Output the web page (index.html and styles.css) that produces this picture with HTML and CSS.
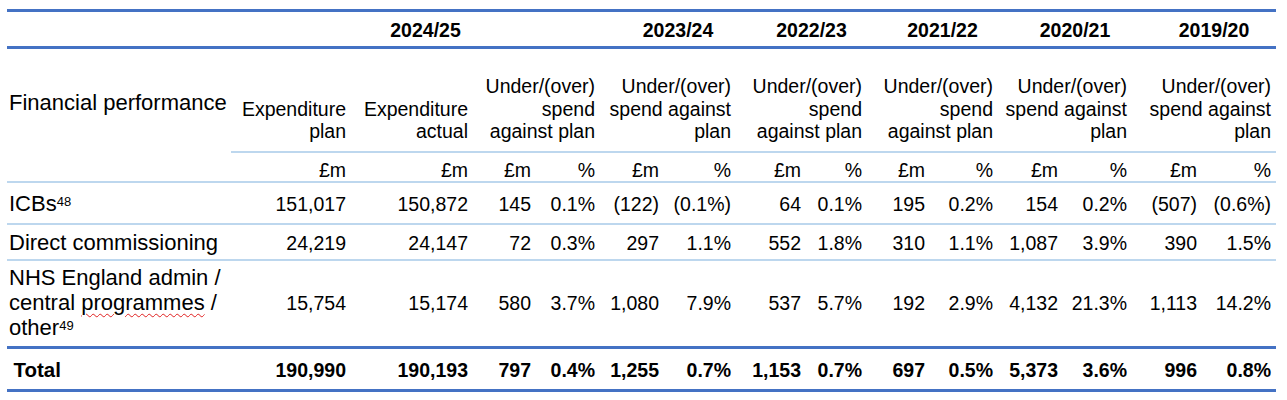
FILE: index.html
```html
<!DOCTYPE html>
<html lang="en">
<head>
<meta charset="utf-8">
<title>Financial performance</title>
<link rel="stylesheet" href="styles.css">
</head>
<body>
<div class="wrap">
<table class="fin">
  <colgroup>
    <col class="c-label">
    <col class="c-plan">
    <col class="c-actual">
    <col class="c-63"><col class="c-64">
    <col class="c-64"><col class="c-72">
    <col class="c-70"><col class="c-61">
    <col class="c-63"><col class="c-68">
    <col class="c-65"><col class="c-69">
    <col class="c-70"><col class="c-74">
  </colgroup>
  <thead>
    <tr class="years">
      <th></th>
      <th colspan="4">2024/25</th>
      <th colspan="2">2023/24</th>
      <th colspan="2">2022/23</th>
      <th colspan="2">2021/22</th>
      <th colspan="2">2020/21</th>
      <th colspan="2">2019/20</th>
    </tr>
    <tr class="heads">
      <th rowspan="2" class="label-head">Financial performance</th>
      <th>Expenditure<br>plan</th>
      <th>Expenditure<br>actual</th>
      <th colspan="2">Under/(over)<br>spend<br>against plan</th>
      <th colspan="2">Under/(over)<br>spend against<br>plan</th>
      <th colspan="2">Under/(over)<br>spend<br>against plan</th>
      <th colspan="2">Under/(over)<br>spend<br>against plan</th>
      <th colspan="2">Under/(over)<br>spend against<br>plan</th>
      <th colspan="2">Under/(over)<br>spend against<br>plan</th>
    </tr>
    <tr class="units">
      <th>£m</th><th>£m</th>
      <th>£m</th><th>%</th>
      <th>£m</th><th>%</th>
      <th>£m</th><th>%</th>
      <th>£m</th><th>%</th>
      <th>£m</th><th>%</th>
      <th>£m</th><th>%</th>
    </tr>
  </thead>
  <tbody>
    <tr class="row r-icb">
      <td class="label">ICBs<sup>48</sup></td>
      <td>151,017</td><td>150,872</td>
      <td>145</td><td>0.1%</td>
      <td>(122)</td><td>(0.1%)</td>
      <td>64</td><td>0.1%</td>
      <td>195</td><td>0.2%</td>
      <td>154</td><td>0.2%</td>
      <td>(507)</td><td>(0.6%)</td>
    </tr>
    <tr class="row r-direct">
      <td class="label">Direct commissioning</td>
      <td>24,219</td><td>24,147</td>
      <td>72</td><td>0.3%</td>
      <td>297</td><td>1.1%</td>
      <td>552</td><td>1.8%</td>
      <td>310</td><td>1.1%</td>
      <td>1,087</td><td>3.9%</td>
      <td>390</td><td>1.5%</td>
    </tr>
    <tr class="row r-nhs">
      <td class="label">NHS England admin /<br>central <span class="spell">programmes</span> /<br>other<sup>49</sup></td>
      <td>15,754</td><td>15,174</td>
      <td>580</td><td>3.7%</td>
      <td>1,080</td><td>7.9%</td>
      <td>537</td><td>5.7%</td>
      <td>192</td><td>2.9%</td>
      <td>4,132</td><td>21.3%</td>
      <td>1,113</td><td>14.2%</td>
    </tr>
    <tr class="row r-total">
      <td class="label">Total</td>
      <td>190,990</td><td>190,193</td>
      <td>797</td><td>0.4%</td>
      <td>1,255</td><td>0.7%</td>
      <td>1,153</td><td>0.7%</td>
      <td>697</td><td>0.5%</td>
      <td>5,373</td><td>3.6%</td>
      <td>996</td><td>0.8%</td>
    </tr>
  </tbody>
</table>
</div>
</body>
</html>
```
FILE: styles.css
```css
html, body {
  margin: 0;
  padding: 0;
  background: #ffffff;
}

.wrap {
  padding: 9px 0 0 7px;
}

.fin {
  border-collapse: separate;
  border-spacing: 0;
  table-layout: fixed;
  width: 1269px;
  font-family: "Liberation Sans", Arial, sans-serif;
  font-size: 19.5px;
  color: #000;
}

.c-label { width: 224px; }
.c-plan { width: 120px; }
.c-actual { width: 122px; }
.c-61 { width: 61px; }
.c-63 { width: 63px; }
.c-64 { width: 64px; }
.c-65 { width: 65px; }
.c-68 { width: 68px; }
.c-69 { width: 69px; }
.c-70 { width: 70px; }
.c-72 { width: 72px; }
.c-74 { width: 74px; }

.fin th,
.fin td {
  padding: 0 5px 0 0;
  text-align: right;
  font-weight: normal;
  white-space: nowrap;
  line-height: 22px;
}

/* Year row */
.years th {
  border-top: 3px solid #4472c4;
  border-bottom: 3px solid #4472c4;
  font-weight: bold;
  text-align: center;
  padding: 7px 0 5px 20px;
  line-height: 22px;
}

/* Column heading row */
.heads th {
  vertical-align: bottom;
  padding-top: 26px;
  padding-bottom: 8.5px;
  line-height: 22.5px;
  border-bottom: 2px solid #bdd7ee;
}

.heads th.label-head {
  vertical-align: top;
  text-align: left;
  font-size: 22px;
  line-height: 25px;
  padding: 41px 0 0 2px;
}

/* Units row */
.units th {
  padding-top: 6px;
  padding-bottom: 0;
  line-height: 22px;
  border-bottom: 2px solid #bdd7ee;
}

/* Data rows */
.row td {
  vertical-align: baseline;
  border-bottom: 2px solid #bdd7ee;
}

.row td.label {
  text-align: left;
  font-size: 22px;
  line-height: 25px;
  padding-left: 2px;
  padding-right: 0;
}

.r-icb td { padding-top: 7.5px; padding-bottom: 7.5px; }
.r-direct td { padding-top: 4.5px; padding-bottom: 4.5px; }

.r-nhs td {
  padding-top: 4px;
  padding-bottom: 6px;
  vertical-align: middle;
  border-bottom: 3px solid #4472c4;
}

.r-total td {
  padding-top: 8.2px;
  padding-bottom: 6.8px;
  font-weight: bold;
  border-bottom: 3px solid #4472c4;
}

.r-total td.label {
  font-size: 20.5px;
  padding-left: 6.5px;
}

sup {
  font-size: 13px;
  line-height: 0;
  vertical-align: 5.5px;
}

.spell {
  text-decoration: underline wavy #e02020;
  text-decoration-thickness: 1px;
  text-underline-offset: 3px;
}
```
